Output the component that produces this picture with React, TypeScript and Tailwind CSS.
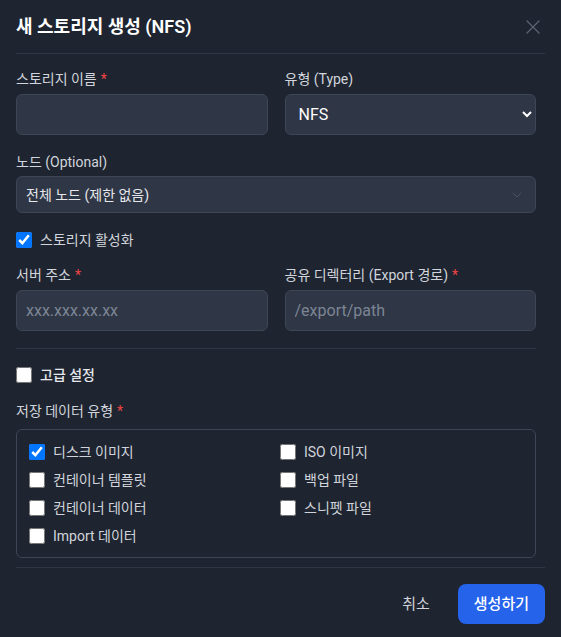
import React, { useState } from 'react';
import { X, ChevronDown } from 'lucide-react';

const font = { fontFamily: 'Roboto, "Noto Sans CJK KR", sans-serif' };

const dataTypes = [
  { id: 'images', label: '디스크 이미지' },
  { id: 'iso', label: 'ISO 이미지' },
  { id: 'vztmpl', label: '컨테이너 템플릿' },
  { id: 'backup', label: '백업 파일' },
  { id: 'rootdir', label: '컨테이너 데이터' },
  { id: 'snippets', label: '스니펫 파일' },
  { id: 'import', label: 'Import 데이터' },
];

function Label({ children, required, className = 'mb-[5px]' }: { children: React.ReactNode; required?: boolean; className?: string }) {
  return (
    <label className={'block text-sm leading-5 text-[#d1d5db] ' + className}>
      {children}
      {required && <span className="ml-1 text-[#ef4444]">*</span>}
    </label>
  );
}

const inputClass =
  'w-full h-[41px] rounded-md border border-[#3d4656] bg-[#2f3646] px-[9px] text-base text-white placeholder-[#7c8594] outline-none';

export default function App() {
  const [name, setName] = useState('');
  const [enabled, setEnabled] = useState(true);
  const [advanced, setAdvanced] = useState(false);
  const [content, setContent] = useState<string[]>(['images']);

  const toggle = (id: string) =>
    setContent(prev => (prev.includes(id) ? prev.filter(c => c !== id) : [...prev, id]));

  return (
    <div className="w-[561px] h-[637px] bg-[#1e2430] text-white" style={font}>
      <div className="mx-4 flex items-center justify-between h-[54px] border-b border-[#2f3745]">
        <h2 className="text-lg font-semibold text-white">새 스토리지 생성 (NFS)</h2>
        <button className="text-[#5b6473]" aria-label="닫기">
          <X className="w-6 h-6" strokeWidth={1.3} />
        </button>
      </div>

      <div className="ml-4 mr-[25px] pt-[15px]">
        <div className="grid grid-cols-2 gap-x-[17px]">
          <div>
            <Label required>스토리지 이름</Label>
            <input className={inputClass} value={name} onChange={e => setName(e.target.value)} />
          </div>
          <div>
            <Label>유형 (Type)</Label>
            <select className={inputClass + ' [color-scheme:dark]'} defaultValue="nfs">
              <option value="nfs">NFS</option>
            </select>
          </div>
        </div>

        <div className="mt-[17px]">
          <Label className="mb-1">노드 (Optional)</Label>
          <div className="relative">
            <select className="w-full h-[37px] appearance-none rounded-md border border-[#3d4656] bg-[#2f3646] px-[9px] text-sm text-[#e5e7eb] outline-none">
              <option>전체 노드 (제한 없음)</option>
            </select>
            <ChevronDown className="absolute right-[11px] top-[11px] w-4 h-4 text-[#4b5462] pointer-events-none" strokeWidth={1.5} />
          </div>
        </div>

        <label className="mt-[17px] flex items-center gap-2 text-sm leading-5 text-[#d1d5db]">
          <input type="checkbox" className="w-4 h-4 m-0" checked={enabled} onChange={() => setEnabled(!enabled)} />
          스토리지 활성화
        </label>

        <div className="mt-[15px] grid grid-cols-2 gap-x-[17px]">
          <div>
            <Label required>서버 주소</Label>
            <input className={inputClass} placeholder="xxx.xxx.xx.xx" />
          </div>
          <div>
            <Label required>공유 디렉터리 (Export 경로)</Label>
            <input className={inputClass} placeholder="/export/path" />
          </div>
        </div>

        <div className="mt-[17px] border-t border-[#2f3745]" />

        <label className="mt-4 flex items-center gap-2 text-sm leading-5 font-medium text-[#e5e7eb]">
          <input type="checkbox" className="w-4 h-4 m-0" checked={advanced} onChange={() => setAdvanced(!advanced)} />
          고급 설정
        </label>

        <div className="mt-4">
          <Label required className="mb-2">저장 데이터 유형</Label>
          <div className="rounded-md border border-[#3d4656] px-3 pt-3 pb-[11px] grid grid-cols-2 gap-x-2 gap-y-2">
            {dataTypes.map(t => (
              <label key={t.id} className="flex items-center gap-2 text-sm leading-5 text-[#d1d5db]">
                <input
                  type="checkbox"
                  className="w-4 h-4 m-0"
                  checked={content.includes(t.id)}
                  onChange={() => toggle(t.id)}
                />
                {t.label}
              </label>
            ))}
          </div>
        </div>
      </div>

      <div className="mx-4 mt-[9px] border-t border-[#2f3745] pt-4 flex justify-end items-center gap-3">
        <button className="px-4 h-10 text-[15px] text-[#d1d5db]">취소</button>
        <button className="px-4 h-10 rounded-lg bg-[#2563eb] text-[15px] font-medium text-white">생성하기</button>
      </div>
    </div>
  );
}
